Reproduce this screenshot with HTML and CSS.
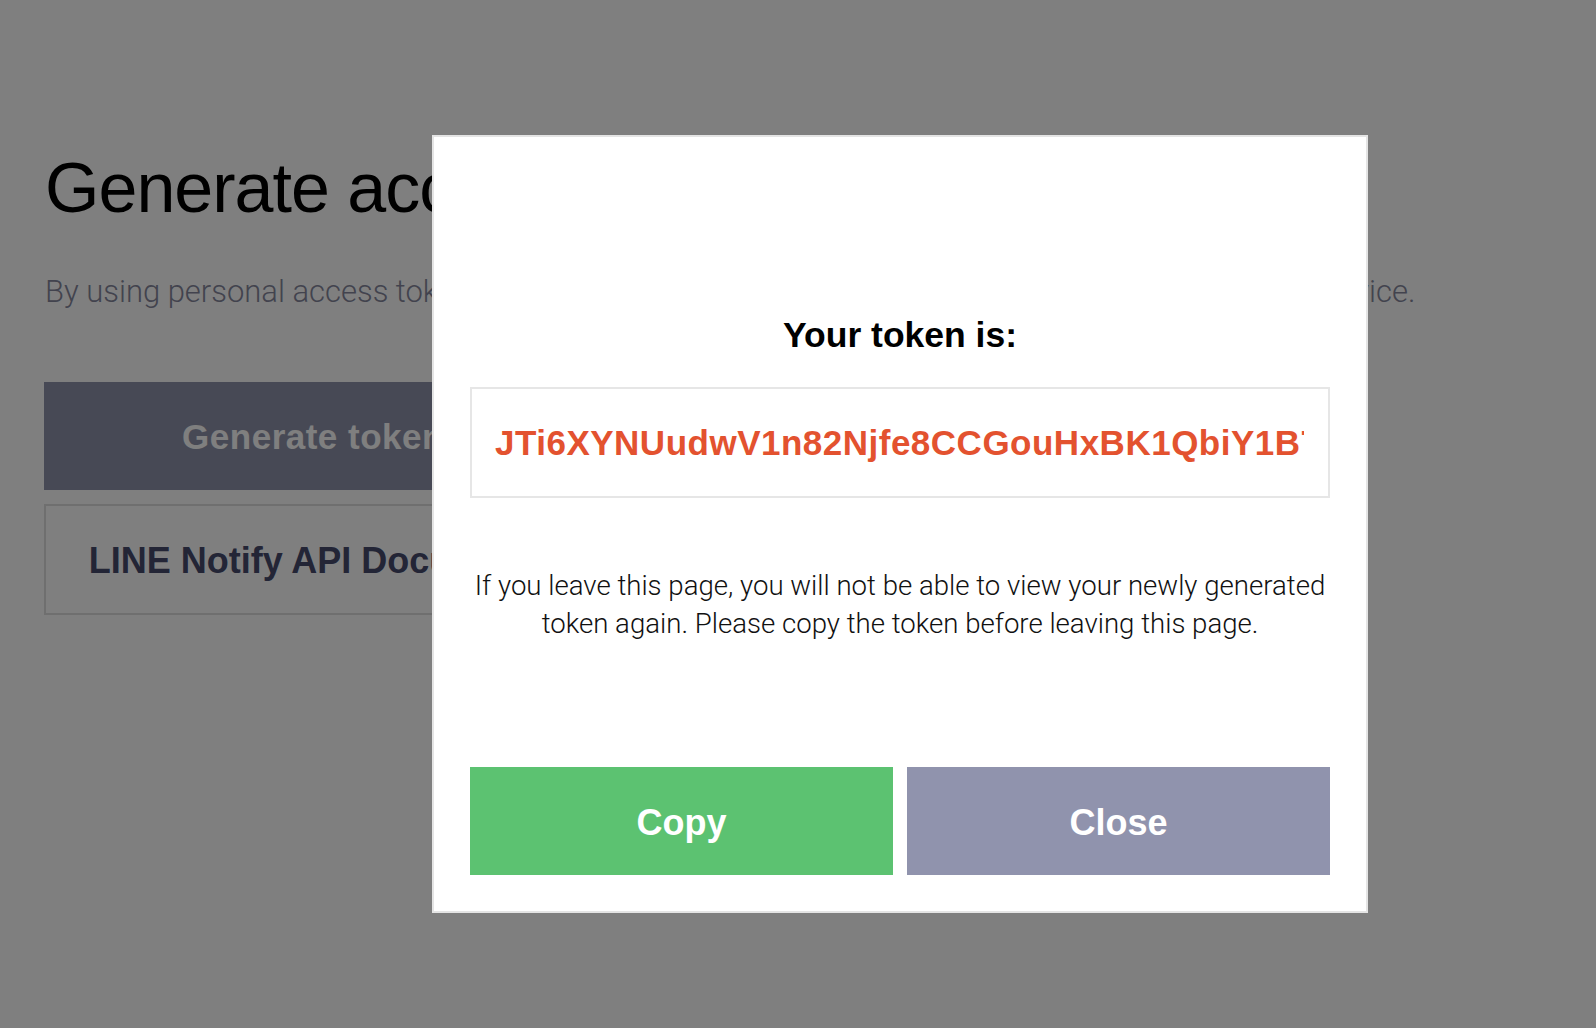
FILE: index.html
```html
<!DOCTYPE html>
<html lang="en">
<head>
<meta charset="utf-8">
<title>Generate access token</title>
<link rel="stylesheet" href="styles.css">
</head>
<body>
<main class="page">
  <h1 class="page-title">Generate access token (For developers)</h1>
  <p class="page-desc">By using personal access tokens, you can configure notifications without having to add a web service.</p>
  <div class="page-actions">
    <button class="btn-generate">Generate token</button>
    <a class="btn-docs" href="#">LINE Notify API Document</a>
  </div>
</main>

<div class="overlay">
  <div class="modal">
    <h2 class="modal-title">Your token is:</h2>
    <div class="token-box"><div class="token-text">JTi6XYNUudwV1n82Njfe8CCGouHxBK1QbiY1B7kR4pZs9mWqE2</div></div>
    <p class="modal-note">If you leave this page, you will not be able to view your newly generated token again. Please copy the token before leaving this page.</p>
    <div class="modal-actions">
      <button class="btn btn-copy">Copy</button>
      <button class="btn btn-close">Close</button>
    </div>
  </div>
</div>
</body>
</html>
```

FILE: styles.css
```css
* { box-sizing: border-box; }

html, body {
  margin: 0;
  padding: 0;
  background: #ffffff;
  font-family: "Liberation Sans", Arial, sans-serif;
}

.page {
  padding: 146px 0 0 45px;
}

.page-title {
  margin: 0;
  font-size: 70px;
  line-height: 84px;
  font-weight: 400;
  letter-spacing: -1px;
  color: #000;
  white-space: nowrap;
}

.page-desc {
  margin: 44px 0 0;
  font-family: Roboto, "Liberation Sans", sans-serif;
  font-weight: 300;
  font-size: 31px;
  line-height: 36px;
  letter-spacing: -0.02px;
  color: #85879c;
  white-space: nowrap;
}

.page-actions {
  margin-top: 72px;
  margin-left: -1px;
  width: 538px;
  display: flex;
  flex-direction: column;
  gap: 14px;
}

.btn-generate {
  height: 108px;
  border: 0;
  background: #8e92aa;
  color: #fff;
  font-family: "Liberation Sans", Arial, sans-serif;
  font-weight: 700;
  font-size: 35px;
  letter-spacing: 0.5px;
  padding: 2px 0 0;
  white-space: nowrap;
}

.btn-docs {
  display: block;
  height: 111px;
  line-height: 105px;
  padding-top: 2px;
  border: 2px solid #dedede;
  text-align: center;
  color: #464a6c;
  font-weight: 700;
  font-size: 36px;
  text-decoration: none;
  white-space: nowrap;
}

.overlay {
  position: fixed;
  inset: 0;
  background: rgba(0, 0, 0, 0.5);
}

.modal {
  position: absolute;
  left: 432px;
  top: 135px;
  width: 936px;
  background: #fff;
  border: 2px solid #e4e4e4;
  padding: 178px 36px 36px;
}

.modal-title {
  margin: 0;
  text-align: center;
  font-size: 35.5px;
  line-height: 40px;
  font-weight: 700;
  color: #000;
}

.token-box {
  margin-top: 32px;
  height: 111px;
  border: 2px solid #e6e6e6;
  padding: 0 24px 0 23px;
}

.token-text {
  overflow: hidden;
  white-space: nowrap;
  height: 107px;
  line-height: 107px;
  font-size: 35px;
  font-weight: 700;
  letter-spacing: 0.5px;
  color: #e3522f;
}

.modal-note {
  margin: 69px 0 0;
  text-align: center;
  font-family: Roboto, "Liberation Sans", sans-serif;
  font-weight: 300;
  font-size: 27.6px;
  line-height: 38px;
  color: #111;
}

.modal-actions {
  margin-top: 124px;
  display: flex;
  gap: 14px;
}

.btn {
  flex: 1;
  height: 108px;
  border: 0;
  padding: 3px 0 0;
  color: #fff;
  font-family: "Liberation Sans", Arial, sans-serif;
  font-weight: 700;
  font-size: 36px;
}

.btn-copy { background: #5cc271; }
.btn-close { background: #9093ad; }
```
